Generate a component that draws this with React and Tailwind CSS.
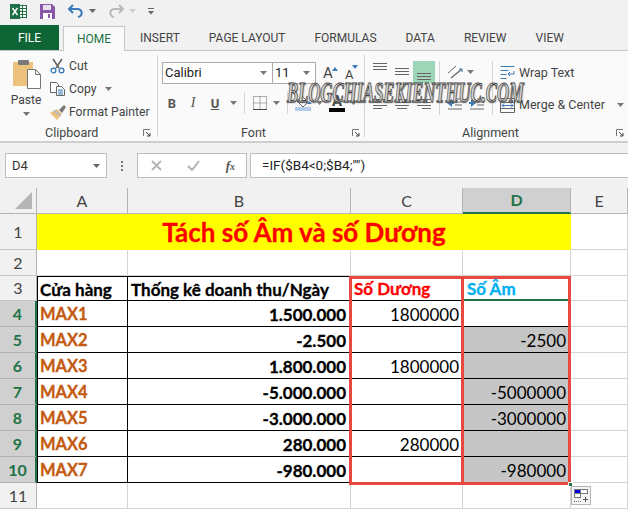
import React from "react";

const ui = "font-['Roboto','Noto_Sans',sans-serif]";
const sheet = "font-['Lato','Open_Sans',sans-serif]";

const Caret = ({ c = "#777" }) => (
  <svg width="7" height="4" viewBox="0 0 7 4" className="shrink-0"><path d="M0 0h7L3.5 4z" fill={c} /></svg>
);

const Lines = ({ rows, w = 15 }) => (
  <svg width={w} height="14" viewBox={`0 0 ${w} 14`} className="shrink-0">
    {rows.map(([y, x, l], i) => <rect key={i} x={x} y={y} width={l} height="1" fill="#666" />)}
  </svg>
);

const Launcher = () => (
  <svg width="8" height="8" viewBox="0 0 8 8" className="shrink-0">
    <path d="M.5 7V.5H7" stroke="#777" fill="none" />
    <path d="M3 3l4 4M7 4v3H4" stroke="#444" fill="none" />
  </svg>
);

const Tab = ({ children, className = "" }) => (
  <div className={`h-full flex items-center text-[12px] text-[#444] ${className}`}>{children}</div>
);

function Ribbon() {
  return (
    <div className="relative h-[93px] bg-[#fafafa] border-t border-[#c6c6c6] border-b-2 border-b-[#cfcfcf] flex text-[#444]">
      <div className="w-[158px] shrink-0 border-r border-[#d4d4d4] mt-[4px] mb-[4px] flex flex-col">
        <div className="flex flex-1">
          <div className="w-[50px] pl-[2px] flex flex-col items-center pt-[4px]">
            <svg width="29" height="31" viewBox="0 0 29 31">
              <rect x="1" y="3" width="20" height="24" fill="#edc27c" />
              <rect x="6" y="1" width="11" height="5" rx="1" fill="#7a7a7a" />
              <path d="M15.5 10.5h8l5 5v14h-13z" fill="#fff" stroke="#777" />
              <path d="M23.5 10.5v5h5" fill="none" stroke="#777" />
            </svg>
            <span className="text-[12px] leading-[16px] mt-[2px]">Paste</span>
            <div className="mt-[4px]"><Caret /></div>
          </div>
          <div className="flex flex-col pt-[1px] text-[12.2px] gap-[3px] whitespace-nowrap">
            <div className="h-[20px] flex items-center gap-[4px]">
              <svg width="15" height="16" viewBox="0 0 15 16">
                <path d="M3 1l6 9M12 1L6 10" stroke="#666" strokeWidth="1.6" fill="none" />
                <circle cx="3.5" cy="12.5" r="2.4" fill="none" stroke="#2e75b6" strokeWidth="1.2" />
                <circle cx="11.5" cy="12.5" r="2.4" fill="none" stroke="#2e75b6" strokeWidth="1.2" />
              </svg>
              <span>Cut</span>
            </div>
            <div className="h-[20px] flex items-center gap-[4px]">
              <svg width="15" height="14" viewBox="0 0 15 14">
                <path d="M.5.5h6l2 2v8h-8z" fill="#fff" stroke="#666" />
                <path d="M6.5 4.5h5l3 3v6h-8z" fill="#fff" stroke="#666" />
                <path d="M8 8h5M8 10h5M8 12h5" stroke="#2e75b6" />
              </svg>
              <span>Copy</span>
              <span className="ml-[5px]"><Caret /></span>
            </div>
            <div className="h-[20px] flex items-center gap-[3px]">
              <svg width="16" height="15" viewBox="0 0 16 15">
                <path d="M0 8l7-4 5 5-5 6z" fill="#edc27c" />
                <path d="M3 6l2-1 6 5-1 2z" fill="#bbb" />
                <path d="M9 5l5-5 2 2-4 6z" fill="#777" />
              </svg>
              <span>Format Painter</span>
            </div>
          </div>
        </div>
        <div className="h-[12px] pt-[4px] flex items-center text-[12.5px]">
          <span className="ml-[45px]">Clipboard</span>
          <span className="ml-auto mr-[6px]"><Launcher /></span>
        </div>
      </div>

      <div className="w-[207px] shrink-0 border-r border-[#d4d4d4] mt-[4px] mb-[4px] flex flex-col pl-[4px]">
        <div className="flex flex-1 flex-col">
          <div className="flex mt-[7px] items-center">
            <div className="w-[111px] h-[22px] bg-white border border-[#ababab] flex items-center justify-between pl-[2px] pr-[5px] text-[13px] text-[#222]">
              <span>Calibri</span><Caret />
            </div>
            <div className="w-[43px] h-[22px] bg-white border border-l-0 border-[#ababab] flex items-center justify-between pl-[2px] pr-[5px] text-[13px] text-[#222]">
              <span>11</span><Caret />
            </div>
            <div className="flex items-end ml-[7px] pt-[1px] leading-none">
              <span className="relative text-[15px] w-[22px]">A<span className="absolute left-[9px] top-[1px]"><svg width="6" height="4" className="block"><path d="M3 0l3 4H0z" fill="#3b79b8" /></svg></span></span>
              <span className="relative text-[13px] w-[12px]">A<span className="absolute left-[7px] -top-[3px]"><svg width="6" height="4" className="block"><path d="M3 4L0 0h6z" fill="#3b79b8" /></svg></span></span>
            </div>
          </div>
          <div className="flex items-center mt-[8px] h-[22px] text-[#555]">
            <span className="w-[20px] text-center font-bold text-[13px] leading-none">B</span>
            <span className="w-[22px] text-center italic text-[14px] font-['Liberation_Serif',serif] leading-none">I</span>
            <span className="w-[22px] text-center underline font-bold text-[13px] leading-none">U</span>
            <span className="ml-[4px]"><Caret /></span>
            <div className="w-px h-[22px] bg-[#d4d4d4] ml-[7px] mr-[8px]" />
            <svg width="14" height="14" viewBox="0 0 14 14"><path d="M.5.5h13v13H.5zM7 .5v13M.5 7h13" fill="none" stroke="#666" strokeDasharray="1 1" /><path d="M0 13.5h14" stroke="#444" /></svg>
            <span className="ml-[6px]"><Caret /></span>
            <div className="w-px h-[22px] bg-[#d4d4d4] ml-[7px] mr-[7px]" />
            <svg width="17" height="16" viewBox="0 0 17 16"><path d="M7 1l6 6-5 5-6-6z" fill="#fff" stroke="#666" /><rect y="12" width="16" height="4" fill="#b4cde8" /><path d="M14 6l3 3h-5z" fill="#3b79b8" /></svg>
            <span className="ml-[4px]"><Caret /></span>
            <div className="ml-[6px] flex flex-col items-center w-[16px] pt-[1px]">
              <span className="text-[15px] font-bold leading-[13px] text-[#444]">A</span>
              <div className="w-[16px] h-[4px] bg-black" />
            </div>
            <span className="ml-[5px]"><Caret /></span>
          </div>
        </div>
        <div className="h-[12px] pt-[4px] flex items-center text-[12.5px]">
          <span className="ml-[79px]">Font</span>
          <span className="ml-auto mr-[4px]"><Launcher /></span>
        </div>
      </div>

      <div className="flex-1 mt-[4px] mb-[4px] flex flex-col pl-[8px]">
        <div className="flex flex-1">
          <div className="w-[66px] pt-[6px] flex flex-col">
            <div className="flex items-start h-[22px]">
              <span className="w-[22px] flex"><Lines rows={[[2,0,14],[5,0,14],[8,0,14]]} /></span>
              <span className="w-[18px] flex"><Lines rows={[[7,0,14],[10,0,14],[13,0,14]]} /></span>
              <span className="w-[22px] h-[22px] bg-[#9fd5b7] flex justify-center items-end"><Lines rows={[[4,0,14],[7,0,14],[10,0,14]]} /></span>
            </div>
            <div className="flex items-center h-[22px] mt-[10px]">
              <span className="w-[22px] flex"><Lines rows={[[2,0,14],[5,0,9],[8,0,14],[11,0,9]]} /></span>
              <span className="w-[22px] flex"><Lines rows={[[2,0,14],[5,2,10],[8,0,14],[11,2,10]]} /></span>
              <span className="w-[22px] flex"><Lines rows={[[2,0,14],[5,5,9],[8,0,14],[11,5,9]]} /></span>
            </div>
          </div>
          <div className="w-px h-[54px] bg-[#d4d4d4] mt-[6px]" />
          <div className="w-[52px] pt-[6px] pl-[7px] flex flex-col">
            <div className="flex items-center h-[22px] gap-[3px]">
              <svg width="17" height="16" viewBox="0 0 17 16">
                <path d="M1 9l8-7" stroke="#666" /><path d="M4 14L15 5" stroke="#666" strokeWidth="1.2" /><path d="M15 5l-3 0m3 0l0 3" stroke="#3b79b8" />
              </svg>
              <Caret />
            </div>
            <div className="flex items-center h-[22px] mt-[10px] gap-[7px]">
              <svg width="15" height="14" viewBox="0 0 15 14"><path d="M0 6l5-4v3h2v2H5v3z" fill="#3b79b8" /><path d="M8 2h7M8 5h7M8 8h7M1 12h14" stroke="#666" /></svg>
              <svg width="15" height="14" viewBox="0 0 15 14"><path d="M7 6L2 2v3H0v2h2v3z" fill="#3b79b8" /><path d="M8 2h7M8 5h7M8 8h7M1 12h14" stroke="#666" /></svg>
            </div>
          </div>
          <div className="w-px h-[54px] bg-[#d4d4d4] mt-[6px]" />
          <div className="pl-[7px] pt-[7px] flex flex-col text-[12.5px] whitespace-nowrap">
            <div className="flex items-center gap-[3px] h-[22px]">
              <svg width="16" height="15" viewBox="0 0 16 15"><path d="M.5.5h14M.5 4.5h8M.5 8.5h6M.5 12.5h6" stroke="#3b79b8" fill="none" /><path d="M14 5v3H8l2-2m-2 2l2 2" stroke="#3b79b8" fill="none" /></svg>
              <span>Wrap Text</span>
            </div>
            <div className="flex items-center gap-[4px] h-[22px] mt-[10px]">
              <svg width="15" height="15" viewBox="0 0 15 15"><path d="M.5.5h14v14H.5zM.5 4.5h14M.5 10.5h14" fill="none" stroke="#666" /><path d="M2 7.5h11M2 7.5l2-2m-2 2l2 2M13 7.5l-2-2m2 2l-2 2" stroke="#3b79b8" fill="none" /></svg>
              <span>Merge &amp; Center</span>
              <span className="ml-[8px]"><Caret /></span>
            </div>
          </div>
        </div>
        <div className="h-[12px] pt-[4px] flex items-center text-[12.5px]">
          <span className="ml-[89px]">Alignment</span>
          <span className="ml-auto mr-[4px]"><Launcher /></span>
        </div>
      </div>

      <div className="absolute left-[287px] top-[27px] text-[29px] leading-none font-bold font-['Liberation_Serif',serif] scale-x-[0.575] origin-left whitespace-nowrap italic text-[#e8e8e8]/80 [-webkit-text-stroke:1px_#444] [text-shadow:1px_1px_2px_#777]">
        BLOGCHIASEKIENTHUC.COM
      </div>
    </div>
  );
}

function FormulaBar() {
  return (
    <div className="h-[45px] bg-[#f1f1f1] flex items-start pt-[10px] pl-[5px] text-[13px] text-[#333]">
      <div className="w-[102px] h-[25px] bg-white border border-[#bdbdbd] flex items-center justify-between pl-[6px] pr-[6px]">
        <span>D4</span><Caret c="#666" />
      </div>
      <div className="w-[2px] h-[10px] mt-[8px] ml-[14px] mr-[14px] [background:repeating-linear-gradient(#777_0_2px,transparent_2px_4px)]" />
      <div className="w-[110px] h-[25px] bg-white border border-[#bdbdbd] flex items-center justify-between pl-[13px] pr-[11px]">
        <svg width="11" height="11" viewBox="0 0 11 11"><path d="M1 1l9 9M10 1l-9 9" stroke="#b3b3b3" strokeWidth="1.8" /></svg>
        <svg width="13" height="11" viewBox="0 0 13 11"><path d="M1 6l4 4 7-9" stroke="#b3b3b3" strokeWidth="2" fill="none" /></svg>
        <span className="font-['Liberation_Serif',serif] italic font-bold text-[#555]">f<span className="text-[10px]">x</span></span>
      </div>
      <div className="flex-1 h-[25px] ml-[3px] bg-white border border-r-0 border-[#bdbdbd] flex items-center pl-[11px] text-[#222] text-[13.5px]">
        =IF($B4&lt;0;$B4;"")
      </div>
    </div>
  );
}

const rows = [
  ["MAX1", "1.500.000", "1800000", ""],
  ["MAX2", "-2.500", "", "-2500"],
  ["MAX3", "1.800.000", "1800000", ""],
  ["MAX4", "-5.000.000", "", "-5000000"],
  ["MAX5", "-3.000.000", "", "-3000000"],
  ["MAX6", "280.000", "280000", ""],
  ["MAX7", "-980.000", "", "-980000"],
];

const RowHead = ({ n, active }) => (
  <div className={`flex items-center justify-center text-[16px] border-b ${active ? "bg-[#d0d0d0] text-[#217346] font-bold border-b-[#b0b0b0] border-r-2 border-r-[#217346]" : "bg-[#f1f1f1] text-[#444] border-b-[#c6c6c6] border-r border-r-[#b5b5b5]"}`}>{n}</div>
);

const Empty = ({ className = "" }) => <div className={`border-b border-r border-[#d4d4d4] ${className}`} />;

const boldInk = "font-bold [-webkit-text-stroke:0.3px_currentColor]";

function Sheet() {
  return (
    <div className={`relative grid grid-cols-[37px_91px_223px_112px_108px_57px] grid-rows-[26px_36px_26px_25px_repeat(7,26px)_26px] bg-white text-[17px] leading-none text-black ${sheet}`}>
      <div className="bg-[#f1f1f1] border-b border-r border-[#b5b5b5] relative overflow-hidden">
        <svg width="18" height="18" viewBox="0 0 18 18" className="absolute right-[3px] bottom-[3px]"><path d="M17 0v17H0z" fill="#b5b5b5" /></svg>
      </div>
      {["A", "B", "C", "D", "E"].map((c) => (
        <div key={c} className={`flex items-center justify-center text-[16px] border-b border-r ${c === "D" ? "bg-[#d0d0d0] text-[#217346] font-bold border-b-2 border-b-[#217346] border-r-[#b5b5b5]" : "bg-[#f1f1f1] text-[#444] border-[#b5b5b5]"}`}>{c}</div>
      ))}

      <RowHead n="1" />
      <div className={`col-span-4 bg-[#ffff00] flex items-center justify-center text-[#ff0000] text-[26px] ${boldInk}`}>Tách số Âm và số Dương</div>
      <Empty />

      <RowHead n="2" />
      <Empty /><Empty /><Empty /><Empty /><Empty />

      <RowHead n="3" />
      <div className={`border border-black flex items-center pl-[2px] pt-[1px] ${boldInk}`}>Cửa hàng</div>
      <div className={`border border-l-0 border-black flex items-center pl-[3px] pt-[1px] ${boldInk}`}>Thống kê doanh thu/Ngày</div>
      <div className={`border-b border-black flex items-center pl-[3px] pt-[1px] text-[#ff0000] ${boldInk}`}>Số Dương</div>
      <div className={`border-b-2 border-[#217346] flex items-center pl-[4px] pt-[1px] text-[#00b0f0] ${boldInk}`}>Số Âm</div>
      <Empty />

      {rows.map((r, i) => (
        <React.Fragment key={r[0]}>
          <RowHead n={i + 4} active />
          <div className={`border-b border-x border-black flex items-center pl-[2px] pt-[2px] text-[16.5px] text-[#c55a11] ${boldInk}`}>{r[0]}</div>
          <div className={`border-b border-r border-black flex items-center justify-end pr-[4px] pt-[2px] ${boldInk}`}>{r[1]}</div>
          <div className="border-b border-black flex items-center justify-end pr-[4px] pt-[2px]">{r[2]}</div>
          <div className={`border-b border-black flex items-center justify-end pr-[5px] pt-[2px] ${i === 0 ? "bg-white" : "bg-[#c6c6c6]"}`}>{r[3]}</div>
          <Empty />
        </React.Fragment>
      ))}

      <RowHead n="11" />
      <Empty /><Empty /><Empty /><Empty /><Empty />

      <div className="absolute left-[349px] top-[88px] w-[115px] h-[209px] border-[3px] border-[#e8483f] pointer-events-none" />
      <div className="absolute left-[461px] top-[88px] w-[110px] h-[209px] border-[3px] border-[#e8483f] pointer-events-none" />
      <div className="absolute left-[568px] top-[294px] w-[5px] h-[5px] bg-[#217346] border border-white" />
      <div className="absolute left-[571px] top-[298px] w-[20px] h-[19px] bg-[#f4f4f4] border border-[#b5b5b5] flex items-center justify-center">
        <svg width="14" height="14" viewBox="0 0 14 14">
          <rect x=".5" y=".5" width="6" height="4" fill="#0000e0" stroke="#777" />
          <rect x="6.5" y=".5" width="7" height="4" fill="#fff" stroke="#777" />
          <rect x=".5" y="4.5" width="6" height="4" fill="#fff" stroke="#777" />
          <path d="M9 10.5h5M11.5 8v5" stroke="#555" />
          <path d="M0 12.5h7" stroke="#777" strokeDasharray="1 1" />
        </svg>
      </div>
    </div>
  );
}

export default function App() {
  return (
    <div className={`w-[628px] h-[510px] overflow-hidden bg-white ${ui}`}>
      <div className="h-[25px] bg-[#f1f1f1] flex items-center pl-[10px] pb-[3px]">
        <svg width="17" height="15" viewBox="0 0 17 15">
          <rect x="7" y="1.5" width="9.5" height="12" fill="#fff" stroke="#1d7044" />
          <path d="M9 4.5h7M9 7.5h7M9 10.5h7M12.5 2v12" stroke="#1d7044" />
          <rect y="0" width="10" height="15" fill="#1d7044" />
          <path d="M2.5 4l5 7M7.5 4l-5 7" stroke="#fff" strokeWidth="1.5" />
        </svg>
        <svg width="15" height="15" viewBox="0 0 15 15" className="ml-[13px]">
          <path d="M0 0h12l3 3v12H0z" fill="#8a56a8" />
          <rect x="3" y="1" width="8" height="5" fill="#e9e0f0" />
          <rect x="3" y="9" width="9" height="6" fill="#fff" />
          <rect x="8" y="10" width="2" height="4" fill="#8a56a8" />
        </svg>
        <svg width="16" height="14" viewBox="0 0 16 14" className="ml-[13px]">
          <path d="M5 1L1 5l4 4" stroke="#3b79b8" strokeWidth="2" fill="none" />
          <path d="M2 5h7c6 0 6 7 1 8" stroke="#3b79b8" strokeWidth="2" fill="none" />
        </svg>
        <span className="ml-[5px]"><Caret c="#666" /></span>
        <svg width="16" height="14" viewBox="0 0 16 14" className="ml-[12px]">
          <path d="M11 1l4 4-4 4" stroke="#b8b8b8" strokeWidth="2" fill="none" />
          <path d="M14 5H7c-6 0-6 7-1 8" stroke="#b8b8b8" strokeWidth="2" fill="none" />
        </svg>
        <span className="ml-[5px]"><Caret c="#ccc" /></span>
        <svg width="6" height="7" viewBox="0 0 6 7" className="ml-[12px]">
          <path d="M0 .5h6" stroke="#666" /><path d="M0 3h6L3 6.5z" fill="#666" />
        </svg>
      </div>
      <div className="h-[25px] bg-[#f1f1f1] flex items-end">
        <div className="w-[59px] h-[25px] bg-[#0e6636] text-white text-[12px] flex items-center justify-center">FILE</div>
        <div className="w-[62px] h-[25px] ml-[4px] bg-[#fafafa] border border-b-0 border-[#c6c6c6] text-[#217346] text-[12px] flex items-center justify-center -mb-px z-10">HOME</div>
        <Tab className="ml-[15px]">INSERT</Tab>
        <Tab className="ml-[29px]">PAGE LAYOUT</Tab>
        <Tab className="ml-[29px]">FORMULAS</Tab>
        <Tab className="ml-[29px]">DATA</Tab>
        <Tab className="ml-[29px]">REVIEW</Tab>
        <Tab className="ml-[29px]">VIEW</Tab>
      </div>
      <Ribbon />
      <FormulaBar />
      <Sheet />
    </div>
  );
}
